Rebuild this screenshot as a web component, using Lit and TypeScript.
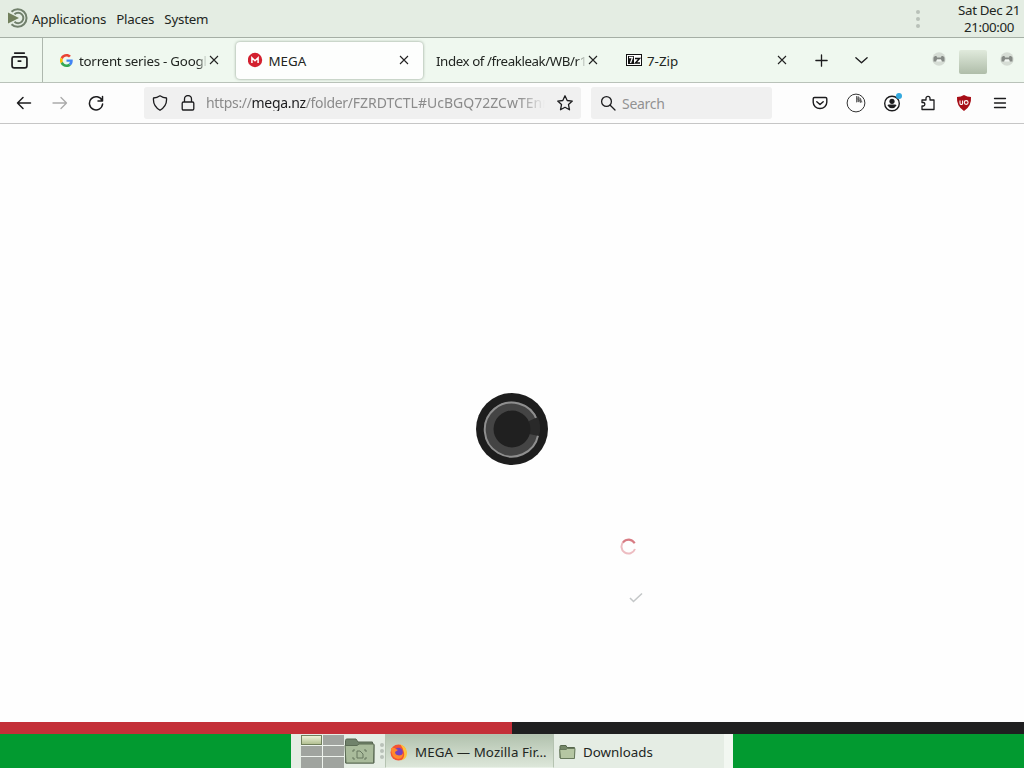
import { LitElement, html, css, svg } from 'lit';
import { customElement, property } from 'lit/decorators.js';
import { classMap } from 'lit/directives/class-map.js';

const closeIcon = html`
  <svg width="10" height="10" viewBox="0 0 10 10" fill="none" stroke="#222" stroke-width="1.1">
    <path d="M1 1l8 8M9 1l-8 8" />
  </svg>
`;

const favicons: Record<string, unknown> = {
  google: html`
    <svg width="13" height="13" viewBox="0 0 48 48">
      <path fill="#EA4335" d="M24 9.5c3.5 0 6.700 1.200 9.200 3.600l6.900-6.900C35.900 2.400 30.500 0 24 0 14.600 0 6.500 5.400 2.600 13.200l8 6.200C12.400 13.700 17.700 9.500 24 9.500z" />
      <path fill="#4285F4" d="M47 24.500c0-1.600-.2-3.100-.4-4.500H24v9h12.900c-.6 3-2.200 5.500-4.700 7.200l7.700 6C44.400 38 47 31.800 47 24.500z" />
      <path fill="#FBBC05" d="M10.500 28.600a14.500 14.500 0 0 1 0-9.200l-8-6.200a24 24 0 0 0 0 21.600z" />
      <path fill="#34A853" d="M24 48c6.500 0 11.900-2.100 15.900-5.800l-7.700-6c-2.200 1.500-4.900 2.300-8.200 2.300-6.300 0-11.600-4.200-13.500-9.900l-8 6.200C6.500 42.600 14.600 48 24 48z" />
    </svg>
  `,
  mega: html`
    <svg width="16" height="16" viewBox="0 0 16 16">
      <circle cx="7" cy="8" r="7.200" fill="#d3202f" />
      <path d="M3.900 11V5.800L7 8.800l3.100-3V11" fill="none" stroke="#fff" stroke-width="1.500" />
    </svg>
  `,
  zip: html`
    <svg width="16" height="12" viewBox="0 0 16 12">
      <path fill="#111" d="M0 0h16v12H0z" />
      <path fill="#fff" d="M1 1h14v10H1z" />
      <path fill="#111" d="M2 2h6v8H2z" />
      <path d="M3 3.500h3.500L4.500 9" fill="none" stroke="#fff" stroke-width="1.300" />
      <path d="M9 4.500h4.500L9.500 9H14" fill="none" stroke="#111" stroke-width="1.500" />
    </svg>
  `
};

const icon = (content: unknown, size = 16) => html`
  <svg width=${size} height=${size} viewBox="0 0 16 16" fill="none" stroke="#1c1c1e"
    stroke-width="1.300" stroke-linecap="round" stroke-linejoin="round">${content}</svg>
`;

@customElement('browser-tab')
export class BrowserTab extends LitElement {
  @property() label = '';
  @property() favicon = '';
  @property({ type: Boolean, reflect: true }) active = false;

  static styles = css`
    :host {
      box-sizing: border-box;
      display: flex;
      align-items: center;
      width: 187px;
      height: 37px;
      padding: 0 14px 0 12px;
      border-radius: 4px;
    }

    :host([active]) {
      background: #fdfefd;
      box-shadow: 0 0 3px rgba(70, 90, 70, 0.6);
    }

    svg {
      display: block;
      flex: none;
    }

    .favicon {
      display: flex;
      justify-content: center;
      width: 16px;
      margin: 0 5px 0 0;
    }

    .label {
      flex: 1;
      min-width: 0;
      overflow: hidden;
      white-space: nowrap;
      padding-top: 2px;
    }

    .fade {
      letter-spacing: -0.25px;
      mask-image: linear-gradient(to left, transparent, #000 9px);
    }

    .plain {
      letter-spacing: -0.42px;
      margin-left: -1px;
    }

    .close {
      margin: -1px 0 0 2px;
    }
  `;

  render() {
    const labelClasses = { label: true, fade: this.label.length > 10, plain: !this.favicon };
    return html`
      ${this.favicon ? html`<div class="favicon">${favicons[this.favicon]}</div>` : ''}
      <div class=${classMap(labelClasses)}>${this.label}</div>
      <div class="close">${closeIcon}</div>
    `;
  }
}

@customElement('app-root')
export class AppRoot extends LitElement {
  static styles = css`
    :host {
      display: flex;
      flex-direction: column;
      width: 1024px;
      height: 768px;
      overflow: hidden;
      background: #fefefe;
      color: #222622;
      font: 13.33px/17px "Noto Sans", sans-serif;
    }

    svg {
      display: block;
      flex: none;
    }

    .panel {
      box-sizing: border-box;
      display: flex;
      align-items: center;
      height: 38px;
      padding: 0 4px 0 7px;
      background: #e4ede3;
      border-bottom: 1px solid #a5afa5;
    }

    .panel > svg {
      margin-top: -1px;
    }

    .menu {
      display: flex;
      gap: 10px;
      margin-left: 3px;
      padding-top: 1px;
      letter-spacing: -0.2px;
    }

    .grip {
      display: flex;
      flex-direction: column;
      gap: 3px;
    }

    .grip i {
      width: 4px;
      height: 4px;
      border-radius: 2px;
      background: #b9c1b9;
    }

    .panel .grip {
      margin-left: auto;
      margin-right: 38px;
    }

    .clock {
      text-align: center;
      letter-spacing: -0.35px;
    }

    .tabs {
      box-sizing: border-box;
      display: flex;
      align-items: center;
      height: 45px;
      background: #eff8ef;
      border-bottom: 1px solid #b9c2b9;
    }

    .recent {
      box-sizing: border-box;
      display: flex;
      align-items: center;
      justify-content: center;
      width: 43px;
      height: 44px;
      padding-right: 3px;
      border-right: 1px solid #aeb8ae;
    }

    browser-tab {
      margin-left: 2.500px;
    }

    browser-tab:first-of-type {
      margin-left: 3px;
    }

    browser-tab:last-of-type {
      margin-left: 2px;
    }

    .tab-tools {
      display: flex;
      gap: 25px;
      margin-left: 13px;
    }

    .window-buttons {
      display: flex;
      align-items: center;
      gap: 13px;
      margin: 0 10px 0 auto;
    }

    .window-buttons svg {
      margin-bottom: 3px;
    }

    .maximize {
      width: 28px;
      height: 24px;
      border-radius: 2px;
      background: linear-gradient(#e0eadc, #afbda9);
      margin-top: 3px;
    }

    .toolbar {
      box-sizing: border-box;
      display: flex;
      align-items: center;
      height: 41px;
      padding: 0 6px 0 16px;
      background: #fdfdfd;
      border-bottom: 1px solid #c6c6c6;
    }

    .nav {
      display: flex;
      gap: 20px;
      width: 128px;
    }

    .field {
      box-sizing: border-box;
      display: flex;
      align-items: center;
      height: 32px;
      background: #f0f0f0;
      border-radius: 3px;
    }

    .address {
      width: 437px;
      gap: 12px;
      padding: 0 8px;
    }

    .url {
      flex: 1;
      min-width: 0;
      margin: -1px 0 0 -2px;
      overflow: hidden;
      white-space: nowrap;
      color: #8b8b8b;
      font-size: 14px;
      mask-image: linear-gradient(to left, transparent, #000 26px);
    }

    .origin {
      letter-spacing: -0.33px;
    }

    .url b {
      color: #1c1c1e;
      font-weight: 400;
    }

    .search {
      width: 181px;
      margin-left: 10px;
      padding: 0 8px 0 9px;
      gap: 6px;
      color: #929292;
      font-size: 14px;
      letter-spacing: -0.3px;
    }

    .actions {
      display: grid;
      grid-template-columns: repeat(6, 36px);
      align-items: center;
      justify-items: center;
      margin-left: auto;
    }

    .page {
      position: relative;
      flex: 1;
      background: #fefefe;
    }

    .camera {
      position: absolute;
      left: 475px;
      top: 268px;
    }

    .spinner {
      position: absolute;
      left: 620px;
      top: 414px;
    }

    .check {
      position: absolute;
      left: 629px;
      top: 468px;
    }

    .stripe {
      height: 12px;
      background: linear-gradient(to right, #c42f38 50%, #1f1f20 50%);
    }

    .desktop {
      display: flex;
      justify-content: center;
      height: 34px;
      background: #029a30;
    }

    .taskbar {
      box-sizing: border-box;
      display: flex;
      align-items: center;
      width: 442px;
      padding-left: 10px;
      background: #e5ede4;
      border-right: 9px solid #f2f7f1;
    }

    .task {
      box-sizing: border-box;
      display: flex;
      align-items: center;
      gap: 7px;
      height: 34px;
      padding: 1px 5px 0 5px;
      white-space: nowrap;
    }

    .task span {
      padding-top: 1px;
    }

    .task.current {
      width: 169px;
      padding-left: 4px;
      margin-left: 1px;
      border: 1px solid #b5c3b1;
      border-bottom-color: #e9f1e7;
      background: linear-gradient(#b2c2ae, #dde7da);
      letter-spacing: 0.1px;
    }

    .pager {
      display: grid;
      grid-template-columns: 21px 21px;
      grid-template-rows: 10px 10px 11px;
      gap: 1px;
      width: 43px;
      background: #eef3ed;
    }

    .pager i {
      background: #a0a49f;
    }

    .pager .used {
      border: 1px solid #71805c;
      background: linear-gradient(#edf3d9, #b3c092);
    }

    .taskbar .grip {
      gap: 2px;
      margin-left: 5px;
    }
  `;

  // the three-dot handle that both desktop panels carry
  grip() {
    return html`<div class="grip"><i></i><i></i><i></i></div>`;
  }

  windowButton() {
    return html`
      <svg width="14" height="14" viewBox="0 0 14 14">
        <circle cx="7" cy="7" r="6.700" fill="#d5dcd4" />
        <path d="M1.500 9.500v-4l1.500-1.500h1.500l.5 1.500h4l.5-1.500H11l1.500 1.500v4H10L9 7.500H5l-1 2z" fill="#858a85" />
        <path d="M4.500 9.500l.5-2h4l.5 2z" fill="#f3f7f3" />
      </svg>
    `;
  }

  folder(home = false) {
    return html`
      <svg width=${home ? 31 : 17} height=${home ? 28 : 16} viewBox=${home ? '0 0 31 28' : '0 0 17 16'}>
        ${home ? svg`
          <path d="M1.500 24V3.500q0-1.500 1.500-1.500h9l2 3h14.500v3H30V26H1.500z" fill="#70826b" stroke="#566451" />
          <path d="M1 8.500h12l2-1.500h15l-.5 19H2z" fill="#a9bb9b" stroke="#5c6c55" />
          <path d="M9 15v-2h2M20 13h2v2M9 20v2h2M20 22h2v-2M13 14h3l3 3v4h-6z" fill="none" stroke="#66775f" />
        ` : svg`
          <path d="M1 14V2.500Q1 1.500 2 1.500h5l1 2h7.500V14z" fill="#748767" stroke="#57684d" />
          <path d="M.7 5.500H7l1.300-1H16l-.6 10H1.500z" fill="#b5c6a2" stroke="#67795b" />
        `}
      </svg>
    `;
  }

  renderPanel() {
    return html`
      <div class="panel">
        <svg width="22" height="22" viewBox="0 0 22 22" fill="none" stroke="#71806c">
          <path d="M4.500 4.800A8.800 8.800 0 1 1 4.500 17.200" stroke-width="2" />
          <path d="M7.500 7.300A5.200 5.200 0 1 1 7.500 14.700" stroke-width="2" />
          <path d="M1 5.500l11 5.500-11 5.500z" fill="#71805c" stroke="none" />
        </svg>
        <div class="menu"><span>Applications</span><span>Places</span><span>System</span></div>
        ${this.grip()}
        <div class="clock">Sat Dec 21<br />21:00:00</div>
      </div>
    `;
  }

  renderTabs() {
    return html`
      <div class="tabs">
        <div class="recent">
          ${icon(svg`<path d="M3.500 1h9M2.500 4.500h11q1.500 0 1.500 1.500v7q0 2-2 2H3q-2 0-2-2V6q0-1.500 1.500-1.500zM6.800 8.500h2.400" stroke-width="1.600" />`, 17)}
        </div>
        <browser-tab favicon="google" label="torrent series - Google Search"></browser-tab>
        <browser-tab favicon="mega" label="MEGA" active></browser-tab>
        <browser-tab label="Index of /freakleak/WB/r113/"></browser-tab>
        <browser-tab favicon="zip" label="7-Zip"></browser-tab>
        <div class="tab-tools">
          ${icon(svg`<path d="M8 2v12M2 8h12" stroke-width="1.400" />`, 15)}
          ${icon(svg`<path d="M2 5L8 10.500 14 5" stroke-width="1.400" />`, 15)}
        </div>
        <div class="window-buttons">
          ${this.windowButton()}
          <div class="maximize"></div>
          ${this.windowButton()}
        </div>
      </div>
    `;
  }

  renderToolbar() {
    return html`
      <div class="toolbar">
        <div class="nav">
          ${icon(svg`<path d="M14.500 8H1.500M7 2.500L1.500 8 7 13.500" stroke-width="1.500" />`)}
          ${icon(svg`<path d="M1 8h13.500M9 2.500L14.500 8 9 13.500" stroke="#aaa" />`)}
          ${icon(svg`<path d="M14 5.500A6.600 6.600 0 1 0 14.600 9M14.500 1.500V6H10" stroke-width="1.500" />`)}
        </div>
        <div class="field address">
          ${icon(svg`<path d="M8 .8q3 2 6.500 2.200.8 8-6.500 12.300Q.7 11 1.500 3 5 2.800 8 .8z" />`)}
          ${icon(svg`<path d="M4.500 7V4a3.500 3.500 0 0 1 7 0v3M3.500 7h9q1.300 0 1.300 1.300v5.400q0 1.300-1.300 1.300h-9q-1.300 0-1.300-1.300V8.300Q2.200 7 3.500 7z" />`)}
          <div class="url"><span class="origin">https://<b>mega.nz</b>/folder/</span>FZRDTCTL#UcBGQ72ZCwTEnn</div>
          ${icon(svg`<path d="M8 .8l2.200 4.700 5.100.6-3.800 3.500 1 5.200L8 12.300l-4.500 2.500 1-5.200L.7 6.100l5.100-.6z" />`)}
        </div>
        <div class="field search">
          ${icon(svg`<circle cx="6.500" cy="6.500" r="4.900" /><path d="M10.200 10.200l4.800 4.800" />`)}
          <span>Search</span>
        </div>
        <div class="actions">
          ${icon(svg`<path d="M2.500 2.500h11q1.300 0 1.300 1.300v3.500a6.800 6.200 0 0 1-13.600 0V3.800q0-1.300 1.300-1.300zM4.800 6.700L8 9.600l3.200-2.900" stroke-width="1.400" />`)}
          <svg width="20" height="20" viewBox="0 0 20 20" fill="none" stroke="#333">
            <circle cx="10" cy="10" r="8.900" />
            <path d="M10 3a7 7 0 0 1 6.500 6.500L10 9z" fill="#999" stroke="none" />
            <path d="M10.500 3v6.500M12.500 3.500V9M14.500 5v5M10 5l6 4" stroke="#555" stroke-width=".7" />
          </svg>
          <svg width="20" height="20" viewBox="0 0 20 20">
            <circle cx="10" cy="10.500" r="7.300" fill="none" stroke="#1c1c1e" stroke-width="1.400" />
            <circle cx="10" cy="8.300" r="2.600" fill="#1c1c1e" />
            <path d="M5.500 12.500q.2-1 1.500-1h6q1.300 0 1.500 1-1.700 2.800-4.500 2.800t-4.500-2.800z" fill="#1c1c1e" />
            <circle cx="17" cy="3" r="3" fill="#33a9df" />
          </svg>
          ${icon(svg`<path d="M2 5h4V3.300a2 2 0 0 1 4 0V5h4v9.500H2V11h1.500a1.800 1.800 0 0 0 0-3.500H2z" />`)}
          <svg width="16" height="16" viewBox="0 0 16 16">
            <path d="M8 0q3 2 7 2 .8 9-7 14Q.2 11 1 2q4 0 7-2z" fill="#a70e17" />
            <path d="M4 5.500v2.700q0 1.300 1.300 1.300t1.300-1.300V5.500" fill="none" stroke="#fff" stroke-width="1.100" />
            <circle cx="10.200" cy="7.500" r="1.900" fill="none" stroke="#fff" stroke-width="1.100" />
          </svg>
          ${icon(svg`<path d="M2.500 3.500h11M2.500 8h11M2.500 12.500h11" stroke-width="1.300" />`)}
        </div>
      </div>
    `;
  }

  renderPage() {
    return html`
      <div class="page">
        <svg class="camera" width="74" height="74" viewBox="0 0 74 74">
          <circle cx="37" cy="37" r="36" fill="#1d1d1d" />
          <circle cx="37" cy="37" r="27.500" fill="#444" />
          <path d="M62 28A27 27 0 1 0 63.200 43" fill="none" stroke="#8f8f8f" stroke-width="2" />
          <path d="M54 29l9-4q3.500 9 1 19l-10-2z" fill="#292929" />
          <circle cx="37" cy="37" r="18.500" fill="#202020" />
        </svg>
        <svg class="spinner" width="17" height="17" viewBox="0 0 17 17" fill="none" stroke-width="2">
          <path d="M14.500 5A7 7 0 1 0 15 11" stroke="#edbcc1" />
          <path d="M3 4.500a7 7 0 0 1 11.700.8" stroke="#d77b83" />
        </svg>
        <svg class="check" width="14" height="12" viewBox="0 0 14 12" fill="none" stroke="#c4c7c8" stroke-width="1.600">
          <path d="M1 6L4.500 9.500 13 1.500" />
        </svg>
      </div>
    `;
  }

  renderTaskbar() {
    return html`
      <div class="desktop">
        <div class="taskbar">
          <div class="pager"><i class="used"></i><i></i><i></i><i></i><i></i><i></i></div>
          ${this.folder(true)}
          ${this.grip()}
          <div class="task current">
            <svg width="18" height="18" viewBox="0 0 18 18">
              <circle cx="8.500" cy="9.500" r="8" fill="#f55432" />
              <path d="M10 1q7 3 7 9t-6 7.500q4-3 3-8T10 1z" fill="#ffc23b" />
              <circle cx="8.500" cy="9" r="4.300" fill="#7542bd" />
              <path d="M1 5q3-1 5 1l2 1-3 2q0 3 4 3.500 3 0 4-2 0 5-5 5.500Q1 15 1 5z" fill="#ff8a2c" />
            </svg>
            <span>MEGA — Mozilla Fir…</span>
          </div>
          <div class="task">${this.folder()}<span>Downloads</span></div>
        </div>
      </div>
    `;
  }

  render() {
    return html`
      ${this.renderPanel()}
      ${this.renderTabs()}
      ${this.renderToolbar()}
      ${this.renderPage()}
      <div class="stripe"></div>
      ${this.renderTaskbar()}
    `;
  }
}
